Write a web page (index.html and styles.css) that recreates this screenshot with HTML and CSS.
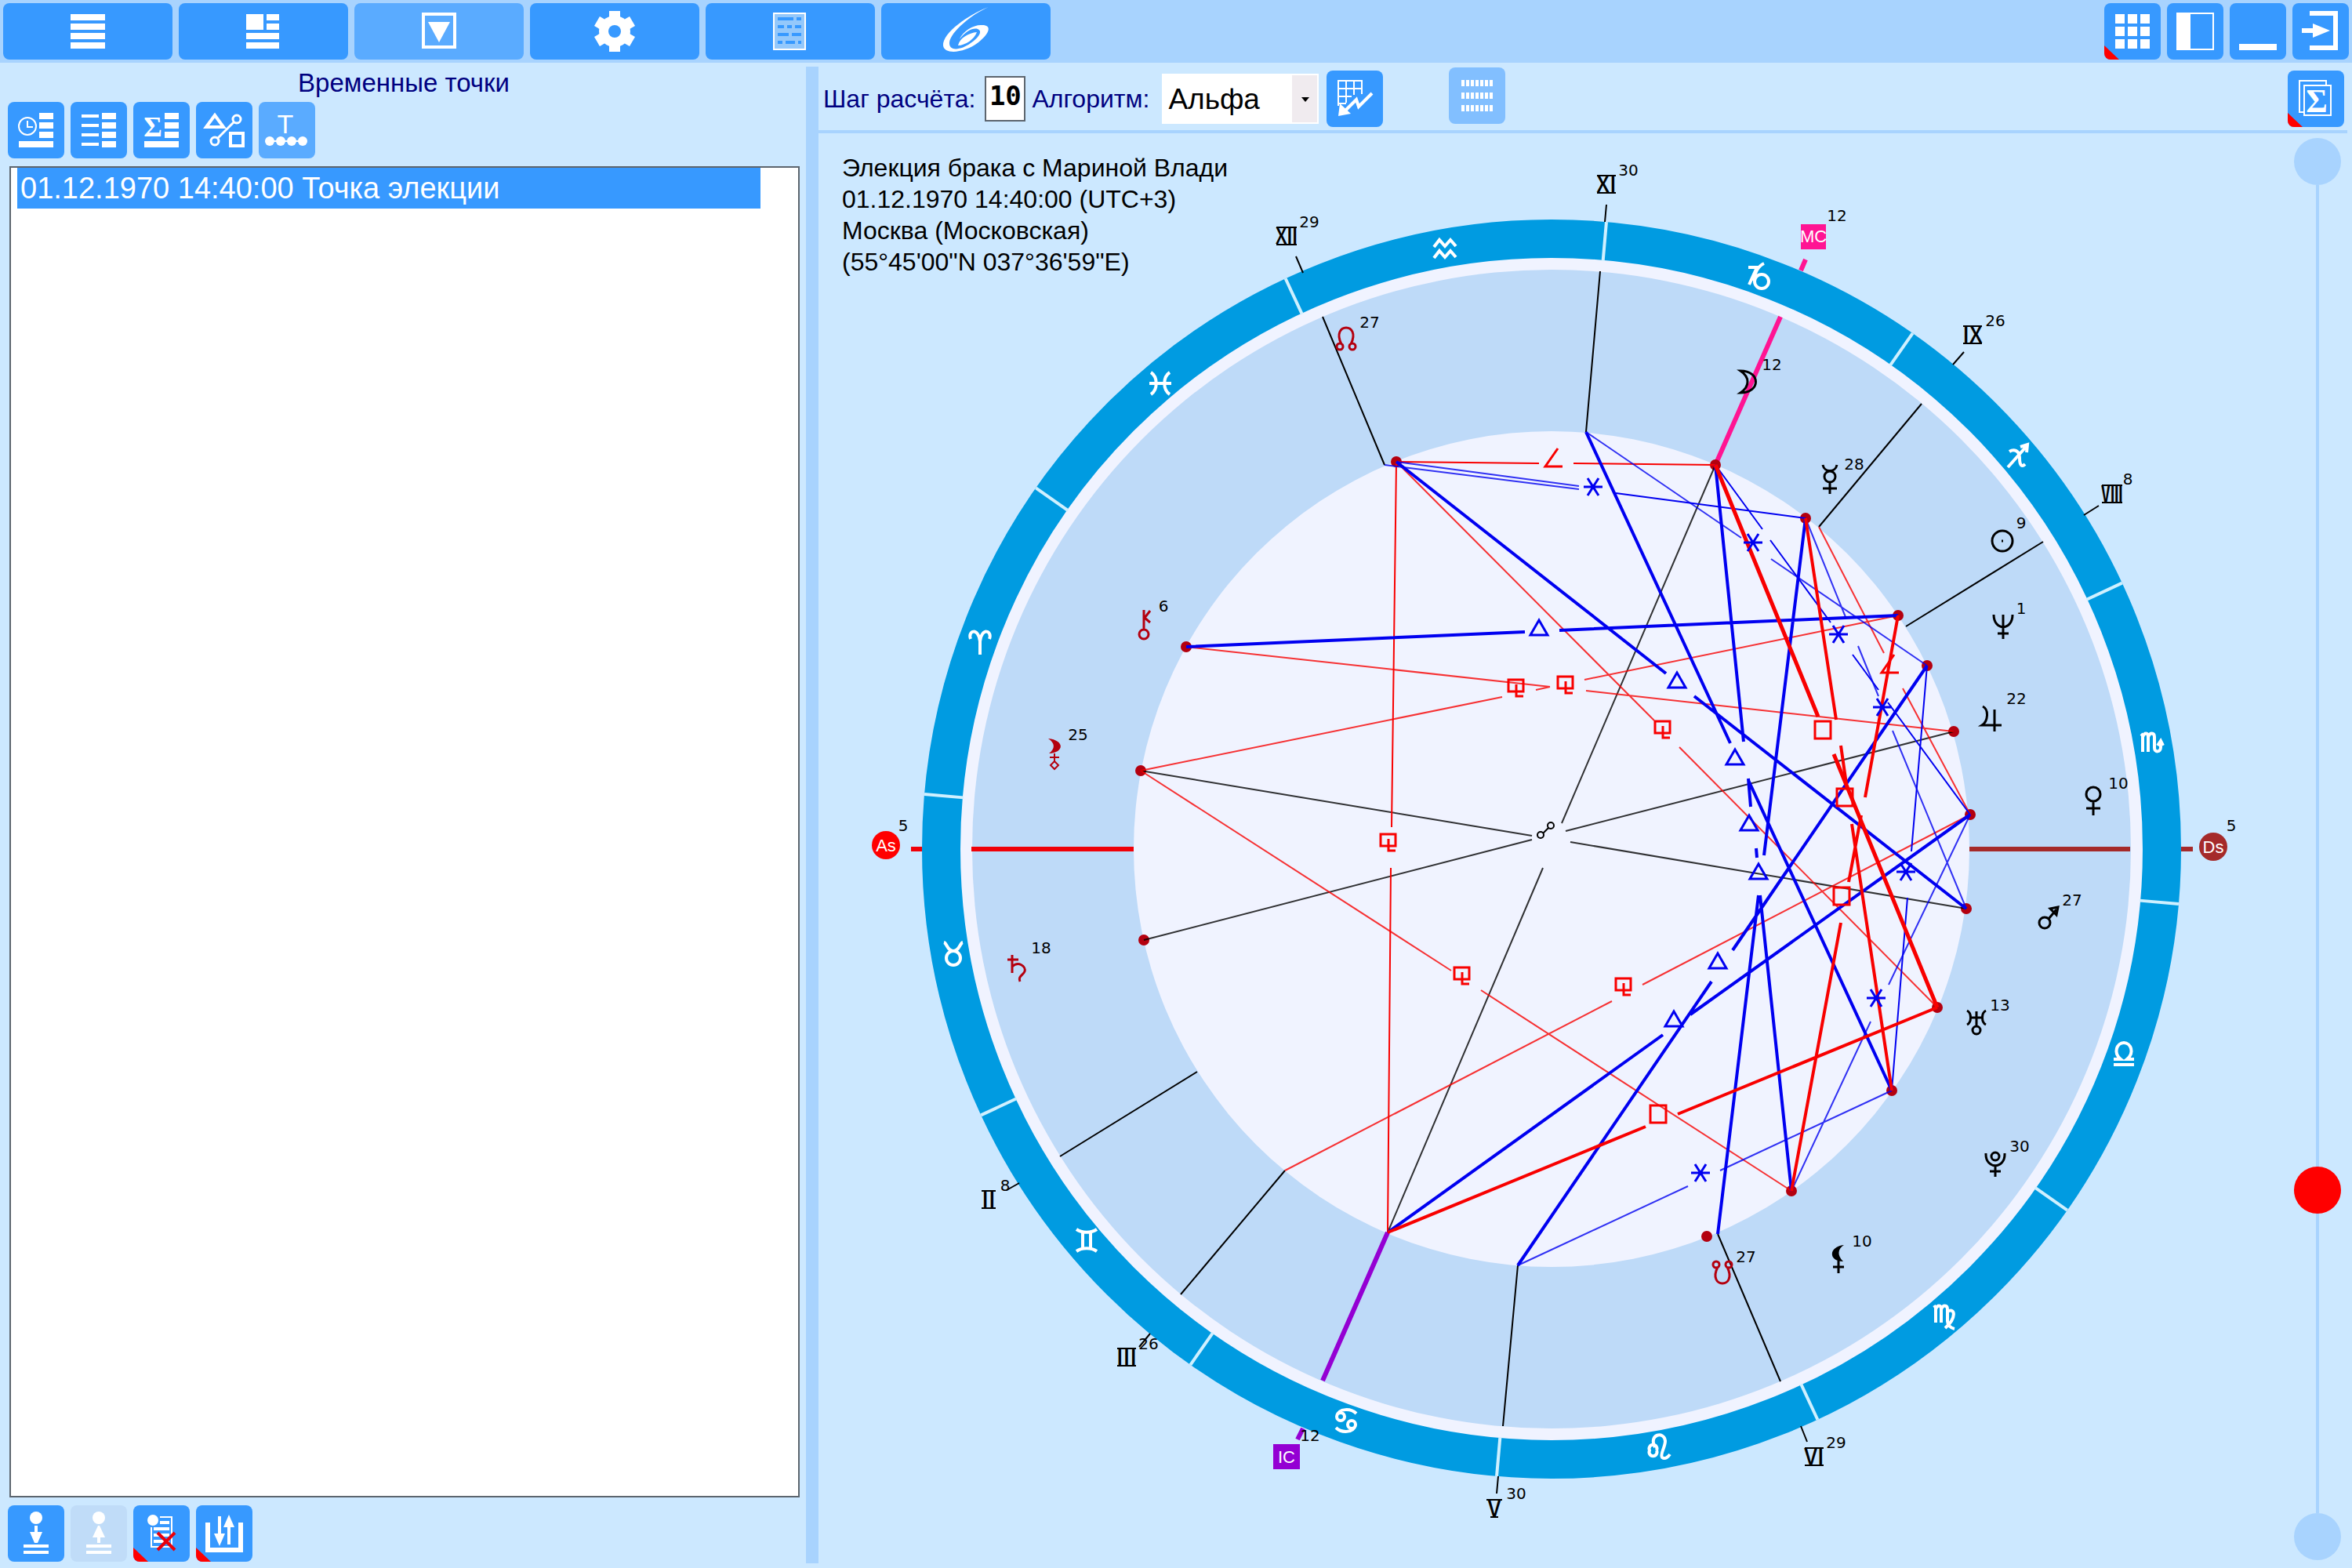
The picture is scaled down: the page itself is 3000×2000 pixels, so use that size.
FILE: index.html
```html
<!DOCTYPE html>
<html lang="ru">
<head>
<meta charset="utf-8">
<title>Временные точки</title>
<link rel="stylesheet" href="styles.css">
</head>
<body>
<header class="topbar">
  <nav class="group">
    <button class="btn wide" aria-label="Меню"><svg viewBox="0 0 72 72"><path d="M14 14h44v8H14zM14 26h44v8H14zM14 38h44v8H14zM14 50h44v8H14z"/></svg></button>
    <button class="btn wide" aria-label="Карточка"><svg viewBox="0 0 72 72"><path d="M14 14h22v20H14zM40 14h16v8H40zM40 26h16v8H40zM14 38h42v8H14zM14 50h42v8H14z"/></svg></button>
    <button class="btn wide active" aria-label="Элекция"><svg viewBox="0 0 72 72"><rect class="ln w4" x="16" y="14" width="40" height="42"/><path d="M22 24h28L36 50z"/></svg></button>
    <button class="btn wide" aria-label="Настройки"><svg viewBox="0 0 72 72"><g class="gear"><path d="M29 10h14v52H29z"/><path d="M29 10h14v52H29z" transform="rotate(60 36 36)"/><path d="M29 10h14v52H29z" transform="rotate(120 36 36)"/><circle cx="36" cy="36" r="20"/></g><circle class="hole" cx="36" cy="36" r="8"/></svg></button>
    <button class="btn wide" aria-label="Документ"><svg viewBox="0 0 72 72"><rect class="sheet" x="15" y="13" width="40" height="46"/><path class="hole" d="M20 18h20v4H20zM44 18h6v4h-6zM20 28h8v4h-8zM32 28h6v4h-6zM42 28h8v4h-8zM20 38h14v4H20zM38 38h12v4H38zM20 48h6v4h-6zM30 48h12v4H30zM46 48h4v4h-4z"/></svg></button>
    <button class="btn wide" aria-label="Галактика"><svg viewBox="0 0 72 72"><path d="M65 5C40 14 6 38 7 54C8 66 34 64 52 50C68 37 69 27 55 28C45 28 32 36 28 46C36 35 46 31 51 33C59 36 50 46 42 51C30 60 14 62 15 50C17 36 44 14 65 5Z"/><path d="M50 37C40 38 28 44 26 54C35 54 47 46 50 37Z"/></svg></button>
  </nav>
  <div class="group">
    <button class="btn" aria-label="Сетка"><svg viewBox="0 0 72 72"><path d="M14 14h12v12H14zM30 14h12v12H30zM46 14h12v12H46zM14 30h12v12H14zM30 30h12v12H30zM46 30h12v12H46zM14 46h12v12H14zM30 46h12v12H30zM46 46h12v12H46z"/><path class="corner" d="M0 54l19 18H0z"/></svg></button>
    <button class="btn" aria-label="Панель"><svg viewBox="0 0 72 72"><path d="M12 12h18v48H12z"/><rect class="ln w2" x="13" y="13" width="46" height="46"/></svg></button>
    <button class="btn" aria-label="Свернуть"><svg viewBox="0 0 72 72"><path d="M12 52h48v8H12z"/></svg></button>
    <button class="btn" aria-label="Выход"><svg viewBox="0 0 72 72"><path class="ln w6" d="M22 13h33v44H22"/><path d="M12 32h14v-6l22 9-22 9v-6H12z"/></svg></button>
  </div>
</header>
<main class="work">
  <section class="side">
    <h1 class="title">Временные точки</h1>
    <div class="group tools">
      <button class="btn" aria-label="По времени"><svg viewBox="0 0 72 72"><circle class="ln w2" cx="25" cy="31" r="11"/><path class="ln w2" d="M25 24v8h7"/><path d="M40 14h18v8H40zM40 26h18v8H40zM40 38h18v8H40zM14 50h44v8H14z"/></svg></button>
      <button class="btn" aria-label="Список"><svg viewBox="0 0 72 72"><path d="M14 16h22v4H14zM14 28h22v4H14zM14 40h22v4H14zM14 52h22v4H14zM40 14h18v8H40zM40 26h18v8H40zM40 38h18v8H40zM40 50h18v8H40z"/></svg></button>
      <button class="btn" aria-label="Сумма"><svg viewBox="0 0 72 72"><text class="sigma small" x="25" y="44">Σ</text><path d="M40 14h18v8H40zM40 26h18v8H40zM40 38h18v8H40zM14 50h44v8H14z"/></svg></button>
      <button class="btn" aria-label="Аспекты"><svg viewBox="0 0 72 72"><path class="ln w4" d="M13 32L24 17L35 32ZM44 40h16v16H44z"/><path class="ln w3" d="M28 46L48 26"/><circle class="ln w3" cx="52" cy="22" r="5"/><circle class="ln w3" cx="24" cy="50" r="5"/></svg></button>
      <button class="btn active" aria-label="Точки"><svg viewBox="0 0 72 72"><text class="letter" x="34" y="40">Т</text><circle cx="14" cy="50" r="6"/><circle cx="28" cy="50" r="6"/><circle cx="42" cy="50" r="6"/><circle cx="56" cy="50" r="6"/><path class="ln w2" d="M14 50h42"/></svg></button>
    </div>
    <ul class="list"><li class="item">01.12.1970 14:40:00 Точка элекции</li></ul>
    <div class="group tools">
      <button class="btn" aria-label="Добавить"><svg viewBox="0 0 72 72"><circle cx="36" cy="16" r="8"/><path d="M34 26h4v8h6l-6 14h-4l-6-14h6zM20 50h32v4H20zM20 58h32v4H20z"/></svg></button>
      <button class="btn" aria-label="Извлечь" disabled><svg viewBox="0 0 72 72"><circle cx="36" cy="16" r="8"/><path d="M35 26h2l7 15h-6v7h-4v-7h-6zM20 50h32v4H20zM20 58h32v4H20z"/></svg></button>
      <button class="btn" aria-label="Удалить"><svg viewBox="0 0 72 72"><path class="ln w2" d="M34 15h15v38H23V28"/><circle cx="25" cy="19" r="7"/><path d="M34 20h12v4H34zM26 28h20v4H26zM26 36h20v4H26zM26 44h20v4H26z"/><path class="cross" d="M31 35l22 22M53 35L31 57"/><path class="corner" d="M0 54l19 18H0z"/></svg></button>
      <button class="btn" aria-label="Сортировка"><svg viewBox="0 0 72 72"><path class="ln w6" d="M15 22v35h42V22"/><path d="M28 14h4v22h5l-7 16-7-16h5zM42 12l7 16h-5v22h-4V28h-5z"/><path class="corner" d="M0 54l19 18H0z"/></svg></button>
    </div>
  </section>
  <section class="view">
    <div class="options">
      <label for="step">Шаг расчёта:</label>
      <input class="step" id="step" type="text" value="10">
      <label for="algo">Алгоритм:</label>
      <span class="pick"><select class="algo" id="algo"><option>Альфа</option></select></span>
      <button class="btn" aria-label="Рассчитать"><svg viewBox="0 0 72 72"><path class="ln w2" d="M15 45V13h30v17M15 23h30M15 33h17M25 13v28M35 13v18M15 42h10"/><path class="ln w4" d="M58 29L41 46L38 37L24 51"/><path d="M15 58l2-16 14 13z"/></svg></button>
      <button class="btn pale" aria-label="Шкала"><svg viewBox="0 0 72 72"><path class="ticks" d="M16 20h40M16 36h40M16 52h40"/></svg></button>
      <button class="btn last" aria-label="Итоги"><svg viewBox="0 0 72 72"><path class="ln w2" d="M20 53h-5V13h34v5M21 19h34v38H21z"/><text class="sigma" x="37" y="53">Σ</text><path class="corner" d="M0 54l19 18H0z"/></svg></button>
    </div>
    <div class="stage">
      <div class="chart">
        <p class="info">Элекция брака с Мариной Влади<br>01.12.1970 14:40:00 (UTC+3)<br>Москва (Московская)<br>(55°45'00"N 037°36'59"E)</p>
        <svg class="wheel" viewBox="1044 170 1868 1830" role="img" aria-label="Карта">
          <defs>
            <!-- aspects -->
            <path id="tri" d="M-11 10L0-9L11 10Z"/>
            <path id="squ" d="M-10-11H10V11H-10Z"/>
            <path id="sxt" d="M-12 0H12M-7-11L7 11M7-11L-7 11"/>
            <path id="sem" d="M6-13L-10 10H12"/>
            <path id="ses" d="M-10-10H9V5H-10ZM0-4V11H9"/>
            <path id="opp" d="M-3 4L4-3M-2 6A4 4 0 1 1-10 6A4 4 0 1 1-2 6M11-6A4 4 0 1 1 3-6A4 4 0 1 1 11-6"/>
            <!-- signs -->
            <path id="ari" d="M-12-5C-16-16-2-20 0-2V15M12-5C16-16 2-20 0-2"/>
            <path id="tau" d="M-12-15C-8-14-8-4 0-4C8-4 8-14 12-15M9 5A9 9 0 1 1-9 5A9 9 0 1 1 9 5"/>
            <path id="gem" d="M-13-14C-6-9 6-9 13-14M-13 14C-6 9 6 9 13 14M-5-10V10M5-10V10"/>
            <path id="can" d="M-12-6C-9-16 6-16 13-9M12 6C9 16-6 16-13 9M-2-5A5 5 0 1 1-12-5A5 5 0 1 1-2-5M12 5A5 5 0 1 1 2 5A5 5 0 1 1 12 5"/>
            <path id="leo" d="M-4 5A5 5 0 1 1-13 5A5 5 0 1 1-4 5M-6 1C-15-16 6-20 7-7C7 1 0 10 3 14C7 17 11 13 13 10"/>
            <path id="vir" d="M-13-14L-11-11V8M-11-9C-9-15-4-15-4-9V8M-4-9C-2-15 4-15 4-9V6C4 11 8 15 13 16M4-6C14-12 16 2 1 15"/>
            <path id="lib" d="M-13 14H13M-13 7H-4C-14-1-9-14 0-14C9-14 14-1 4 7H13"/>
            <path id="sco" d="M-13-12L-11-10V11M-11-8C-9-14-4-14-4-8V11M-4-8C-2-14 4-14 4-8V6C4 12 12 12 12 5V0M8 3L12-3L15 3"/>
            <path id="sag" d="M-13 14L11-13M3-12L12-15L11-5M-11-6C-5-10 2-7 2 2C2 12 5 14 9 10"/>
            <path id="cap" d="M-13-12H-2L-12 10M7-17C0-14-6-4-6 5M13 6A9 9 0 1 1-5 6A9 9 0 1 1 13 6"/>
            <path id="aqu" d="M-14-3L-7-12L0-4L7-12L14-4M-14 11L-7 2L0 10L7 2L14 10"/>
            <path id="pis" d="M-12-14C-3-8-3 8-12 14M12-14C3-8 3 8 12 14M-14 0H14"/>
            <!-- planets and points -->
            <path id="moo" d="M-10-14C16-14 16 14-10 14C2 6 2-6-10-14Z"/>
            <path id="mer" d="M-9-18C-7-8 7-8 9-18M7-3A7 7 0 1 1-7-3A7 7 0 1 1 7-3M0 5V19M-9 12H9"/>
            <path id="sun" d="M13 0A13 13 0 1 1-13 0A13 13 0 1 1 13 0M-1 0H1"/>
            <path id="nep" d="M-12-15C-12 6 12 6 12-15M0-15V16M-7 9H7"/>
            <path id="jup" d="M-11-16C-3-12-4 3-12 8H13M4-12V16"/>
            <path id="ven" d="M9-9A9 9 0 1 1-9-9A9 9 0 1 1 9-9M0 1V18M-9 9H9"/>
            <path id="mar" d="M2 7A7 7 0 1 1-12 7A7 7 0 1 1 2 7M0 2L10-10M2-11L12-13L10-3L6-7Z"/>
            <path id="ura" d="M-12-15C-6-12-6 0-12 3M12-15C6-12 6 0 12 3M-8-6H8M0-14V5M5 10A5 5 0 1 1-5 10A5 5 0 1 1 5 10"/>
            <path id="plu" d="M-12-13C-13 8 13 8 12-13M5-9A5 5 0 1 1-5-9A5 5 0 1 1 5-9M0 3V17M-7 10H7"/>
            <path id="nod" d="M-6 8C-20-20 20-20 6 8M-4 11A4 4 0 1 1-12 11A4 4 0 1 1-4 11M12 11A4 4 0 1 1 4 11A4 4 0 1 1 12 11"/>
            <path id="chi" d="M6 13A6 6 0 1 1-6 13A6 6 0 1 1 6 13M0 7V-18M8-17L1-8L8-2"/>
            <path id="sat" d="M-12-11H2M-6-17V6M-6-2C2-10 12-2 10 4C8 9 1 10 4 17"/>
          </defs>

          <circle class="band" cx="1979" cy="1083" r="778"/>
          <circle class="rim" cx="1979" cy="1083" r="746"/>
          <circle class="houses" cx="1979" cy="1083" r="739"/>
          <circle class="core" cx="1979" cy="1083" r="533"/>

          <g class="divs">
            <path d="M1176 1083h50" transform="rotate(5 1979 1083)"/><path d="M1176 1083h50" transform="rotate(35 1979 1083)"/><path d="M1176 1083h50" transform="rotate(65 1979 1083)"/><path d="M1176 1083h50" transform="rotate(95 1979 1083)"/><path d="M1176 1083h50" transform="rotate(125 1979 1083)"/><path d="M1176 1083h50" transform="rotate(155 1979 1083)"/><path d="M1176 1083h50" transform="rotate(185 1979 1083)"/><path d="M1176 1083h50" transform="rotate(215 1979 1083)"/><path d="M1176 1083h50" transform="rotate(245 1979 1083)"/><path d="M1176 1083h50" transform="rotate(275 1979 1083)"/><path d="M1176 1083h50" transform="rotate(305 1979 1083)"/><path d="M1176 1083h50" transform="rotate(335 1979 1083)"/>
          </g>

          <g class="cusps">
            <path d="M1766 593L1687 404M1653 327L1662 348M2023 551L2041 346M2049 261L2047 283M2320 672L2451 515M2505 449L2491 465M2431 799L2606 691M2677 645L2658 657M1527 1367L1352 1475M1300 1509L1284 1518M1639 1493L1506 1651M1467 1701L1453 1718M1936 1614L1917 1819M1911 1883L1909 1905M2191 1574L2271 1762M2297 1819L2305 1839"/>
          </g>
          <path class="axis mc" d="M2188 593L2271 404M2303 331L2297 345"/>
          <path class="axis ic" d="M1770 1572L1687 1761M1662 1822L1655 1836"/>
          <path class="axis as" d="M1239 1083H1446M1162 1083H1176"/>
          <path class="axis ds" d="M2512 1083H2717M2782 1083H2797"/>

          <g class="dots">
            <circle cx="1781" cy="589" r="7"/><circle cx="2188" cy="593" r="7"/><circle cx="2303" cy="661" r="7"/><circle cx="2421" cy="785" r="7"/><circle cx="2458" cy="849" r="7"/><circle cx="2492" cy="933" r="7"/><circle cx="2513" cy="1039" r="7"/><circle cx="2508" cy="1159" r="7"/><circle cx="2471" cy="1285" r="7"/><circle cx="2413" cy="1391" r="7"/><circle cx="2285" cy="1519" r="7"/><circle cx="2177" cy="1577" r="7"/><circle cx="1513" cy="825" r="7"/><circle cx="1455" cy="983" r="7"/><circle cx="1459" cy="1199" r="7"/>
          </g>

          <g class="rays">
            <path class="black thin" d="M1455 983L1954 1066M2003 1074L2508 1159M1459 1199L1954 1071M1997 1060L2492 933M2188 593L1992 1050M1968 1107L1770 1572"/>
            <path class="red thin" d="M1781 589L2110 919M2142 953L2471 1285M1513 825L1977 876M2023 881L2492 933M1455 983L1916 889M1959 880L1977 876M2021 867L2421 785M1455 983L1851 1238M1889 1263L2285 1519M1639 1493L2056 1277M2095 1256L2513 1039M2320 672L2403 833M2427 878L2513 1039"/>
            <path class="red mid" d="M1781 589L1963 591M2007 591L2188 593M1781 589L1775 1055M1774 1107L1770 1572"/>
            <path class="blue thin" d="M1781 589L2014 620M1766 593L2014 624M2023 551L2221 686M2259 713L2458 849M2303 661L2354 787M2370 824L2396 888M2414 932L2508 1159M1936 1614L2153 1513M2194 1493L2413 1391M2513 1039L2409 1256M2386 1303L2285 1519"/>
            <path class="blue mid" d="M2061 629L2303 661M2188 593L2248 675M2258 689L2335 794M2363 835L2396 880M2408 896L2513 1039M2458 849L2438 1086M2433 1145L2413 1391"/>
            <path class="blue bold" d="M1781 589L2125 859M2161 888L2508 1159M1513 825L1945 806M1989 804L2421 785M1770 1572L2121 1320M2156 1294L2513 1039M1936 1614L2183 1252M2210 1212L2458 849M2191 1574L2243 1142M2250 1091L2303 661M2285 1519L2245 1142M2240 1082L2241 1094M2230 993L2233 1029M2188 593L2224 946M2023 551L2207 948M2230 995L2413 1391"/>
            <path class="red bold" d="M1770 1572L2099 1437M2140 1421L2471 1285M2303 661L2342 918M2348 951L2355 1000M2362 1051L2413 1391M2421 785L2379 1017M2374 1040L2358 1125M2348 1177L2285 1519"/>
            <path class="red heavy" d="M2188 593L2319 914M2339 962L2471 1285"/>
          </g>

          <g class="marks blue">
            <use href="#sxt" x="2032" y="621"/><use href="#sxt" x="2236" y="692"/><use href="#sxt" x="2345" y="809"/><use href="#sxt" x="2401" y="902"/><use href="#sxt" x="2431" y="1112"/><use href="#sxt" x="2393" y="1273"/><use href="#sxt" x="2169" y="1496"/>
            <use href="#tri" x="2139" y="867"/><use href="#tri" x="1963" y="800"/><use href="#tri" x="2213" y="965"/><use href="#tri" x="2231" y="1049"/><use href="#tri" x="2243" y="1111"/><use href="#tri" x="2191" y="1225"/><use href="#tri" x="2135" y="1299"/>
          </g>
          <g class="marks red">
            <use href="#sem" x="1981" y="585"/><use href="#sem" x="2410" y="848"/>
            <use href="#ses" x="1934" y="877"/><use href="#ses" x="1997" y="873"/><use href="#ses" x="2121" y="930"/><use href="#ses" x="1771" y="1074"/><use href="#ses" x="1865" y="1244"/><use href="#ses" x="2071" y="1258"/>
            <use href="#squ" x="2325" y="931"/><use href="#squ" x="2353" y="1017"/><use href="#squ" x="2349" y="1143"/><use href="#squ" x="2115" y="1421"/>
          </g>
          <use class="marks black" href="#opp" x="1971" y="1059"/>

          <g class="signs">
            <use href="#aqu" x="1843" y="318"/><use href="#cap" x="2243" y="353"/><use href="#sag" x="2574" y="582"/><use href="#sco" x="2744" y="948"/><use href="#lib" x="2709" y="1344"/><use href="#vir" x="2480" y="1679"/><use href="#leo" x="2117" y="1845"/><use href="#can" x="1717" y="1812"/><use href="#gem" x="1386" y="1582"/><use href="#tau" x="1216" y="1217"/><use href="#ari" x="1250" y="820"/><use href="#pis" x="1480" y="489"/>
          </g>

          <g class="bodies">
            <use href="#moo" x="2230" y="487"/><use href="#mer" x="2334" y="611"/><use href="#sun" x="2554" y="690"/><use href="#nep" x="2555" y="799"/><use href="#jup" x="2540" y="917"/><use href="#ven" x="2670" y="1022"/><use href="#mar" x="2613" y="1170"/><use href="#ura" x="2521" y="1304"/><use href="#plu" x="2545" y="1484"/>
            <g transform="translate(2345 1606)"><path class="solid" d="M7-18C-13-16-13 3 6 3C-2-5-1-13 7-18Z"/><path d="M0 2V18M-7 10H7"/></g>
          </g>
          <g class="bodies retro">
            <use href="#nod" x="1717" y="431"/><use href="#nod" transform="translate(2197 1624) rotate(180)"/><use href="#chi" x="1459" y="796"/><use href="#sat" x="1297" y="1235"/>
            <g transform="translate(1345 962)"><path class="solid" d="M-8-20C13-18 13-2-7-1C1-7 1-14-8-20Z"/><path class="fine" d="M0-1V9M-6 4H6M0 9L5 14L0 19L-5 14Z"/></g>
          </g>

          <g class="roman">
            <text x="1641" y="311">Ⅻ</text><text x="2049" y="245">Ⅺ</text><text x="2516" y="437">Ⅸ</text><text x="2694" y="640">Ⅷ</text><text x="1261" y="1540">Ⅱ</text><text x="1437" y="1741">Ⅲ</text><text x="1906" y="1934">Ⅴ</text><text x="2314" y="1868">Ⅵ</text>
          </g>
          <path class="serifs" d="M1628 290h26M1628 312h26M2037 224h24M2037 246h24M2504 416h24M2504 438h24M2681 619h26M2681 641h26M1252 1519h18M1252 1541h18M1425 1720h24M1425 1742h24M1896 1913h20M1901 1935h10M2302 1847h24M2302 1869h24"/>

          <rect class="tag-mc" x="2297" y="286" width="32" height="32"/><rect class="tag-ic" x="1624" y="1842" width="34" height="32"/>
          <circle class="tag-as" cx="1130" cy="1078" r="18"/><circle class="tag-ds" cx="2823" cy="1080" r="18"/>
          <g class="tags">
            <text x="2313" y="309">MC</text><text x="1641" y="1866">IC</text><text x="1130" y="1086">As</text><text x="2823" y="1088">Ds</text>
          </g>

          <g class="deg">
            <text x="1670" y="290">29</text><text x="2077" y="224">30</text><text x="2343" y="282">12</text><text x="2545" y="416">26</text><text x="2714" y="618">8</text><text x="2846" y="1060">5</text><text x="1152" y="1060">5</text><text x="1282" y="1519">8</text><text x="1465" y="1721">26</text><text x="1671" y="1838">12</text><text x="1934" y="1912">30</text><text x="2342" y="1847">29</text>
            <text x="1747" y="418">27</text><text x="2260" y="472">12</text><text x="2365" y="599">28</text><text x="2578" y="674">9</text><text x="2578" y="783">1</text><text x="2572" y="898">22</text><text x="2702" y="1006">10</text><text x="2643" y="1155">27</text><text x="2551" y="1289">13</text><text x="2576" y="1469">30</text><text x="2375" y="1590">10</text><text x="2227" y="1610">27</text><text x="1484" y="780">6</text><text x="1375" y="944">25</text><text x="1328" y="1216">18</text>
          </g>
        </svg>
      </div>
      <div class="scale">
        <button class="end" aria-label="В начало"></button>
        <input class="range" type="range" min="0" max="1000" value="766" aria-label="Положение">
        <button class="end" aria-label="В конец"></button>
      </div>
    </div>
  </section>
</main>
</body>
</html>
```
FILE: styles.css
```css
* { box-sizing: border-box; }
body {
  margin: 0;
  min-height: 100vh;
  display: flex;
  flex-direction: column;
  background: #cce8ff;
  color: #000;
  font-family: "Liberation Sans", Arial, sans-serif;
  font-size: 32px;
}
.topbar {
  display: flex;
  justify-content: space-between;
  height: 80px;
  padding: 4px;
  background: #a8d3fe;
}
.group { display: flex; gap: 8px; }
.btn {
  display: flex;
  justify-content: center;
  flex: none;
  width: 72px;
  height: 72px;
  padding: 0;
  border: 0;
  border-radius: 8px;
  overflow: hidden;
  background: #3799ff;
}
.btn.wide { width: 216px; }
.btn.active { background: #5aabff; }
.btn.pale { background: #82bfff; }
.btn:disabled { background: #c0dcf8; }
.btn svg { width: 72px; height: 72px; fill: #fff; }
.ln { fill: none; stroke: #fff; }
.w2 { stroke-width: 2; }
.w3 { stroke-width: 3; }
.w4 { stroke-width: 4; }
.w6 { stroke-width: 6; }
.btn .hole { fill: #3799ff; }
.btn .sheet { fill: #94c8fb; stroke: #fff; stroke-width: 2; }
.btn .corner { fill: #f00; }
.cross { stroke: #e8000c; stroke-width: 4; }
.ticks { stroke: #fff; stroke-width: 8; stroke-dasharray: 4 2; }
.sigma {
  font: bold 42px "Liberation Serif", serif;
  text-anchor: middle;
}
.sigma.small { font-size: 36px; }
.letter { font-size: 34px; text-anchor: middle; }

.work { flex: 1; display: flex; }
.side {
  flex: none;
  width: 34.8%;
  display: flex;
  flex-direction: column;
  padding: 8px 8px 8px 10px;
  border-right: 16px solid #a8d3fe;
  border-image: linear-gradient(#cce8ff 6px, #a8d3fe 6px, #a8d3fe calc(100% - 7px), #cce8ff calc(100% - 7px)) 1;
}
.title {
  margin: 0;
  height: 42px;
  color: #000080;
  font-size: 33px;
  font-weight: 400;
  line-height: 36px;
  text-align: center;
}
.list {
  flex: 1;
  margin: 10px 0 10px 2px;
  padding: 0 48px 0 8px;
  border: 2px solid #5c656e;
  background: #fff;
  list-style: none;
}
.item {
  padding-left: 4px;
  background: #3799ff;
  color: #fff;
  font-size: 38px;
  line-height: 52px;
  white-space: nowrap;
}
.view { flex: 1; min-width: 0; display: flex; flex-direction: column; }
.options {
  display: flex;
  align-items: center;
  gap: 8px;
  height: 90px;
  margin-right: 6px;
  padding: 6px 4px 0 6px;
  border-bottom: 4px solid #a8d3fe;
  color: #000080;
}
.step {
  width: 52px;
  height: 58px;
  margin-left: 4px;
  padding: 0 0 8px;
  border: 2px solid #5c656e;
  background: #fff;
  font: bold 34px "DejaVu Sans Mono", monospace;
  text-align: center;
}
.pick { position: relative; margin: 0 2px 0 8px; }
.pick::after {
  content: "";
  position: absolute;
  right: 12px;
  top: 30px;
  border: 5px solid transparent;
  border-top: 6px solid #000;
  border-bottom: 0;
}
.algo {
  display: block;
  width: 200px;
  height: 64px;
  padding: 0 6px;
  border: 2px solid #fff;
  border-radius: 0;
  appearance: none;
  background: linear-gradient(90deg, #fff calc(100% - 32px), #f0ebef 0);
  color: #000;
  font: 37px "Liberation Sans", Arial, sans-serif;
}
.pale { margin: -8px 0 0 76px; }
.last { margin-left: auto; }

.stage { flex: 1; display: flex; }
.chart { position: relative; flex: 1; min-width: 0; }
.wheel { display: block; width: 100%; height: auto; }
.info {
  position: absolute;
  left: 30px;
  top: 24px;
  margin: 0;
  font-size: 32px;
  line-height: 40px;
  white-space: nowrap;
}
.band { fill: none; stroke: #009be1; stroke-width: 50; }
.rim { fill: none; stroke: #f0f3ff; stroke-width: 16; }
.houses { fill: #bedaf8; }
.core { fill: #f0f3ff; }
.divs { stroke: #cff0ff; stroke-width: 4; }
.cusps { stroke: #000; stroke-width: 2; }
.axis { stroke-width: 6; }
.mc { stroke: #ff1493; }
.ic { stroke: #9400d3; }
.as { stroke: #f00008; }
.ds { stroke: #a52a2a; }
.dots { fill: #b4000f; }
.rays { fill: none; }
.black { stroke: #000; }
.red { stroke: #f80000; }
.blue { stroke: #0000f0; }
.thin { stroke-width: 2px; stroke-opacity: .8; }
.mid { stroke-width: 2px; }
.bold { stroke-width: 4px; }
.heavy { stroke-width: 5px; }
.marks { fill: none; stroke-width: 3px; }
.marks.black { stroke-width: 2px; }
.signs { fill: none; stroke: #fff; stroke-width: 4; }
.bodies { fill: none; stroke: #000; stroke-width: 3; }
.retro { stroke: #b4000f; }
.solid { fill: #000; stroke: none; }
.retro .solid { fill: #b4000f; }
.fine { stroke-width: 2; }
.roman { font: 500 28px "Noto Sans CJK JP", sans-serif; text-anchor: middle; }
.serifs { stroke: #000; stroke-width: 2; }
.tags { fill: #fff; font: 22px "Liberation Sans Narrow", "Liberation Sans", sans-serif; text-anchor: middle; }
.tag-mc { fill: #ff1493; }
.tag-ic { fill: #9400d3; }
.tag-as { fill: #f00; }
.tag-ds { fill: #a52a2a; }
.deg { font: 20px "DejaVu Sans", sans-serif; text-anchor: middle; }

.scale {
  flex: none;
  display: flex;
  flex-direction: column;
  align-items: center;
  width: 60px;
  margin: 6px 14px 10px;
}
.end {
  flex: none;
  width: 60px;
  height: 60px;
  padding: 0;
  border: 0;
  border-radius: 50%;
  background: #a8d3fe;
}
.range {
  flex: 1;
  width: 60px;
  margin: 0;
  appearance: none;
  background: linear-gradient(#a8d3fe, #a8d3fe) center / 4px 100% no-repeat;
  writing-mode: vertical-lr;
}
.range::-webkit-slider-thumb {
  appearance: none;
  width: 60px;
  height: 60px;
  border-radius: 50%;
  background: #f00;
}
```
